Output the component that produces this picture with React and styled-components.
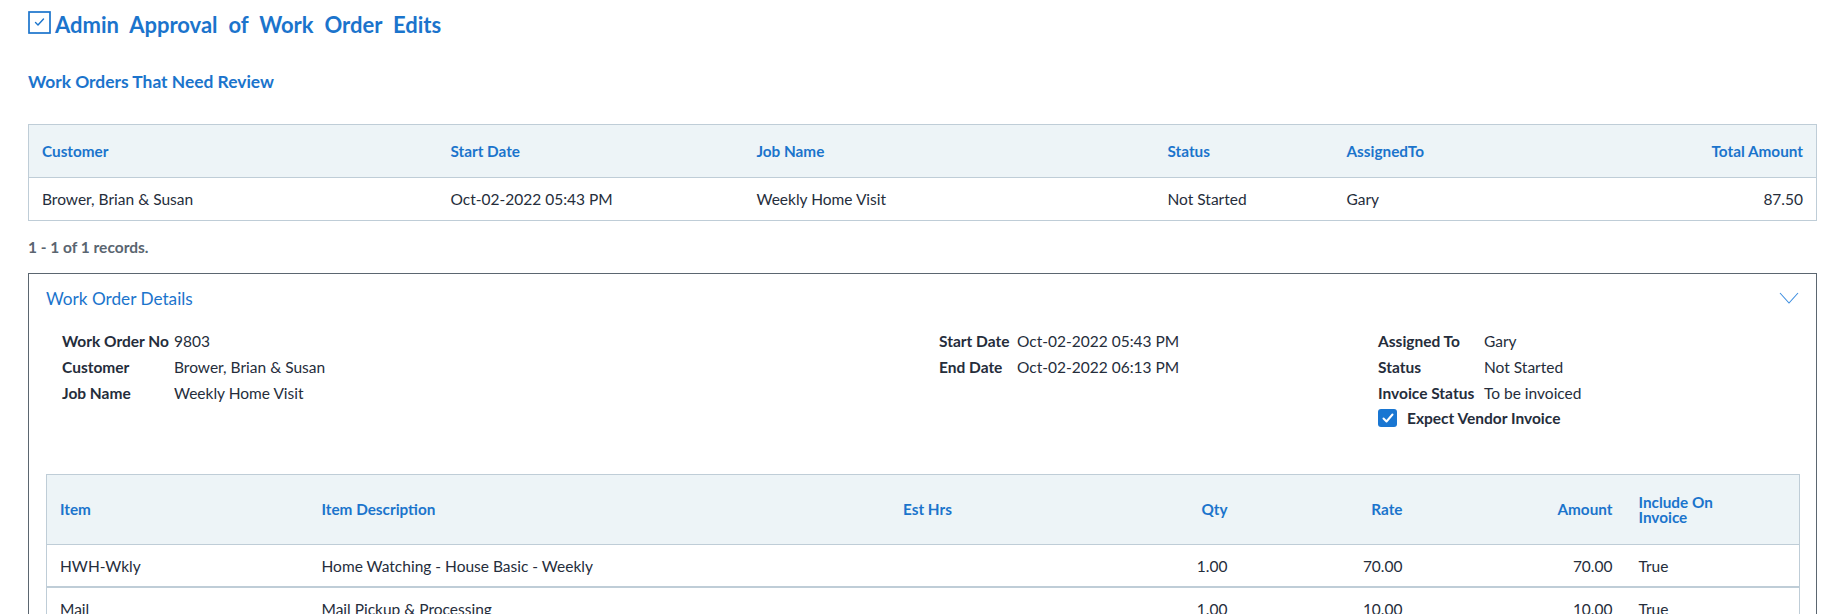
import React from 'react';
import styled, { createGlobalStyle } from 'styled-components';

const GlobalStyle = createGlobalStyle`
  body {
    margin: 0;
    background: #fff;
    font-family: 'Lato', 'Liberation Sans', sans-serif;
    font-size: 15.5px;
    color: #252d3b;
  }
`;

const BLUE = '#1b74cc';
const GRID_LINE = '#bfcdd7';

const Page = styled.div`
  padding: 11px 18px 0 28px;
`;

const PageTitle = styled.h1`
  display: flex;
  align-items: center;
  gap: 4px;
  margin: 0;
  height: 23px;
  font-size: 22px;
  font-weight: 700;
  color: ${BLUE};
  word-spacing: 5.6px;
`;

const TitleText = styled.span`
  padding-top: 3px;
`;

const SectionTitle = styled.h2`
  margin: 37px 0 0;
  line-height: 22px;
  font-size: 17.4px;
  font-weight: 700;
  color: ${BLUE};
`;

const DataTable = styled.table`
  width: 100%;
  border-collapse: collapse;
  table-layout: fixed;
  border: 1px solid ${GRID_LINE};
  margin-top: ${(p) => p.$top || 0}px;
`;

const HeadCell = styled.th`
  height: ${(p) => p.$h}px;
  padding: 0 13px;
  background: #edf4f7;
  border-bottom: 1px solid ${GRID_LINE};
  color: ${BLUE};
  font-weight: 700;
  font-size: 15.3px;
  line-height: 15px;
  text-align: ${(p) => p.$align || 'left'};
  vertical-align: middle;
`;

const Cell = styled.td`
  height: ${(p) => p.$h}px;
  padding: 0 13px;
  border-bottom: ${(p) => (p.$thick ? 2 : 1)}px solid ${GRID_LINE};
  text-align: ${(p) => p.$align || 'left'};
  white-space: nowrap;
`;

const RecordCount = styled.div`
  margin-top: 16px;
  line-height: 20px;
  font-weight: 700;
  color: #5a6570;
`;

const DetailsPanel = styled.section`
  margin-top: 16px;
  border: 1px solid #5b6670;
  padding: 12px 17px 24px 17px;
`;

const PanelHeader = styled.div`
  display: flex;
  align-items: center;
  justify-content: space-between;
  height: 24px;
`;

const PanelTitle = styled.div`
  font-size: 17.2px;
  color: ${BLUE};
`;

const Fields = styled.div`
  display: grid;
  grid-template-columns: 877px 439px 1fr;
  margin: 18px 0 0 16px;
`;

const FieldGroup = styled.div`
  display: grid;
  grid-template-columns: ${(p) => p.$label}px 1fr;
  grid-auto-rows: 26px;
  align-items: center;
  align-content: start;
`;

const Label = styled.span`
  font-weight: 700;
  white-space: nowrap;
`;

const CheckRow = styled.label`
  grid-column: 1 / -1;
  display: flex;
  align-items: center;
  gap: 10px;
  height: 24px;
  margin-top: -2px;
  font-weight: 700;
`;

const CheckBox = styled.span`
  display: inline-flex;
  align-items: center;
  justify-content: center;
  width: 19px;
  height: 18px;
  border-radius: 3px;
  background: #1976d2;
`;

const ItemsWrap = styled.div`
  margin-top: 42px;
`;

function TitleIcon() {
  return (
    <svg width="23" height="23" viewBox="0 0 23 23">
      <rect x="1" y="1" width="21" height="21" fill="none" stroke={BLUE} strokeWidth="1.7" />
      <path d="M7.5 11.5 L10 14 L15.5 8" fill="none" stroke={BLUE} strokeWidth="1.4" strokeLinecap="round" strokeLinejoin="round" />
    </svg>
  );
}

function Chevron() {
  return (
    <svg width="20" height="12" viewBox="0 0 20 12">
      <path d="M1 1 L10 11 L19 1" fill="none" stroke="#3d8ee0" strokeWidth="1.1" />
    </svg>
  );
}

const orderCols = [409, 306, 411, 179, 240, 243];
const itemCols = [262, 398, 442, 92, 175, 210, 174];

const items = [
  { code: 'HWH-Wkly', desc: 'Home Watching - House Basic - Weekly', qty: '1.00', rate: '70.00', amount: '70.00', include: 'True' },
  { code: 'Mail', desc: 'Mail Pickup & Processing', qty: '1.00', rate: '10.00', amount: '10.00', include: 'True' },
];

export default function App() {
  return (
    <Page>
      <GlobalStyle />
      <PageTitle>
        <TitleIcon />
        <TitleText>Admin Approval of Work Order Edits</TitleText>
      </PageTitle>
      <SectionTitle>Work Orders That Need Review</SectionTitle>

      <DataTable $top={31}>
        <colgroup>
          {orderCols.map((w, i) => (
            <col key={i} style={{ width: w }} />
          ))}
        </colgroup>
        <thead>
          <tr>
            <HeadCell $h={52}>Customer</HeadCell>
            <HeadCell $h={52}>Start Date</HeadCell>
            <HeadCell $h={52}>Job Name</HeadCell>
            <HeadCell $h={52}>Status</HeadCell>
            <HeadCell $h={52}>AssignedTo</HeadCell>
            <HeadCell $h={52} $align="right">Total Amount</HeadCell>
          </tr>
        </thead>
        <tbody>
          <tr>
            <Cell $h={42}>Brower, Brian &amp; Susan</Cell>
            <Cell $h={42}>Oct-02-2022 05:43 PM</Cell>
            <Cell $h={42}>Weekly Home Visit</Cell>
            <Cell $h={42}>Not Started</Cell>
            <Cell $h={42}>Gary</Cell>
            <Cell $h={42} $align="right">87.50</Cell>
          </tr>
        </tbody>
      </DataTable>
      <RecordCount>1 - 1 of 1 records.</RecordCount>

      <DetailsPanel>
        <PanelHeader>
          <PanelTitle>Work Order Details</PanelTitle>
          <Chevron />
        </PanelHeader>

        <Fields>
          <FieldGroup $label={112}>
            <Label>Work Order No</Label>
            <span>9803</span>
            <Label>Customer</Label>
            <span>Brower, Brian &amp; Susan</span>
            <Label>Job Name</Label>
            <span>Weekly Home Visit</span>
          </FieldGroup>
          <FieldGroup $label={78}>
            <Label>Start Date</Label>
            <span>Oct-02-2022 05:43 PM</span>
            <Label>End Date</Label>
            <span>Oct-02-2022 06:13 PM</span>
          </FieldGroup>
          <FieldGroup $label={106}>
            <Label>Assigned To</Label>
            <span>Gary</span>
            <Label>Status</Label>
            <span>Not Started</span>
            <Label>Invoice Status</Label>
            <span>To be invoiced</span>
            <CheckRow>
              <CheckBox>
                <svg width="12" height="10" viewBox="0 0 12 10">
                  <path d="M1.5 5.5 L4.5 8.5 L10.5 1.5" fill="none" stroke="#fff" strokeWidth="2" strokeLinecap="round" strokeLinejoin="round" />
                </svg>
              </CheckBox>
              Expect Vendor Invoice
            </CheckRow>
          </FieldGroup>
        </Fields>

        <ItemsWrap>
          <DataTable>
            <colgroup>
              {itemCols.map((w, i) => (
                <col key={i} style={{ width: w }} />
              ))}
            </colgroup>
            <thead>
              <tr>
                <HeadCell $h={69}>Item</HeadCell>
                <HeadCell $h={69}>Item Description</HeadCell>
                <HeadCell $h={69} $align="center">Est Hrs</HeadCell>
                <HeadCell $h={69} $align="right">Qty</HeadCell>
                <HeadCell $h={69} $align="right">Rate</HeadCell>
                <HeadCell $h={69} $align="right">Amount</HeadCell>
                <HeadCell $h={69}>
                  Include On
                  <br />
                  Invoice
                </HeadCell>
              </tr>
            </thead>
            <tbody>
              {items.map((it) => (
                <tr key={it.code}>
                  <Cell $h={41} $thick>{it.code}</Cell>
                  <Cell $h={41} $thick>{it.desc}</Cell>
                  <Cell $h={41} $thick />
                  <Cell $h={41} $thick $align="right">{it.qty}</Cell>
                  <Cell $h={41} $thick $align="right">{it.rate}</Cell>
                  <Cell $h={41} $thick $align="right">{it.amount}</Cell>
                  <Cell $h={41} $thick>{it.include}</Cell>
                </tr>
              ))}
            </tbody>
          </DataTable>
        </ItemsWrap>
      </DetailsPanel>
    </Page>
  );
}
